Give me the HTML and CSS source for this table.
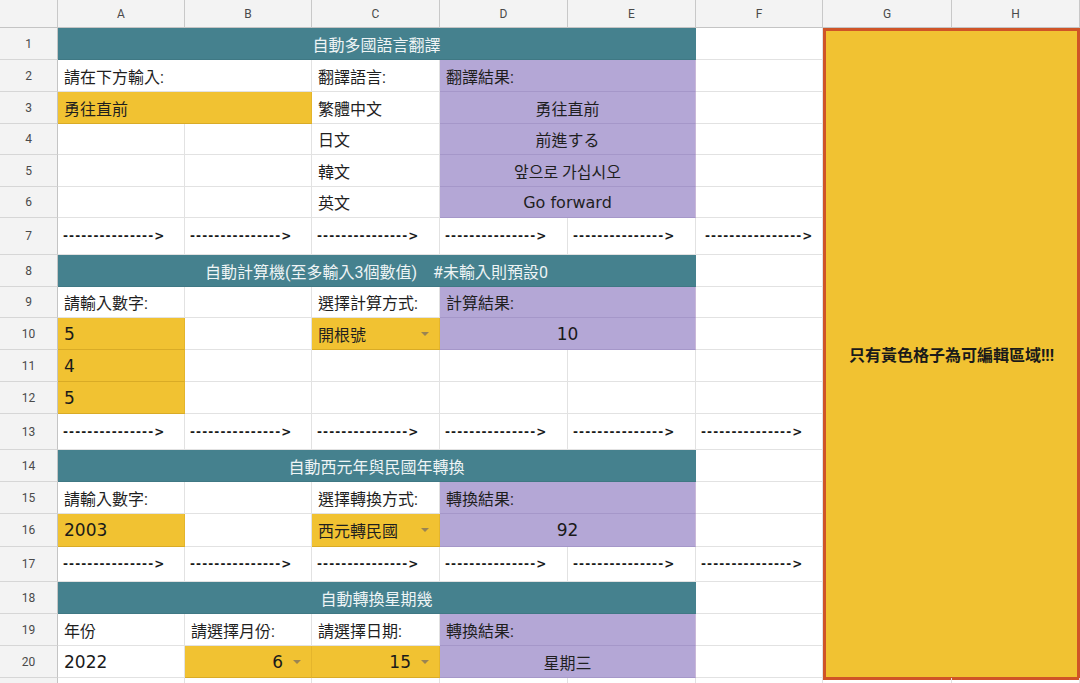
FILE: index.html
```html
<!DOCTYPE html>
<html lang="zh-Hant">
<head>
<meta charset="utf-8">
<title>自動多國語言翻譯</title>
<link rel="stylesheet" href="styles.css">
</head>
<body>
<div class="sheet">
  <div class="h corner"></div>
  <div class="h">A</div><div class="h">B</div><div class="h">C</div><div class="h">D</div><div class="h">E</div><div class="h">F</div><div class="h">G</div><div class="h">H</div>

  <div class="note">只有黃色格子為可編輯區域!!!</div>

  <!-- 1 -->
  <div class="rn">1</div>
  <div class="c teal s5">自動多國語言翻譯</div>
  <div class="c"></div>
  <!-- 2 -->
  <div class="rn">2</div>
  <div class="c s2">請在下方輸入:</div>
  <div class="c">翻譯語言:</div>
  <div class="c purple s2">翻譯結果:</div>
  <div class="c"></div>
  <!-- 3 -->
  <div class="rn">3</div>
  <div class="c yellow s2">勇往直前</div>
  <div class="c">繁體中文</div>
  <div class="c purple s2 center">勇往直前</div>
  <div class="c"></div>
  <!-- 4 -->
  <div class="rn">4</div>
  <div class="c"></div><div class="c"></div>
  <div class="c">日文</div>
  <div class="c purple s2 center">前進する</div>
  <div class="c"></div>
  <!-- 5 -->
  <div class="rn">5</div>
  <div class="c"></div><div class="c"></div>
  <div class="c">韓文</div>
  <div class="c purple s2 center">앞으로 가십시오</div>
  <div class="c"></div>
  <!-- 6 -->
  <div class="rn">6</div>
  <div class="c"></div><div class="c"></div>
  <div class="c">英文</div>
  <div class="c purple s2 center latin">Go forward</div>
  <div class="c"></div>
  <!-- 7 -->
  <div class="rn">7</div>
  <div class="c arrow">---------------&gt;</div>
  <div class="c arrow">---------------&gt;</div>
  <div class="c arrow">---------------&gt;</div>
  <div class="c arrow">---------------&gt;</div>
  <div class="c arrow">---------------&gt;</div>
  <div class="c arrow far">----------------&gt;</div>
  <!-- 8 -->
  <div class="rn">8</div>
  <div class="c teal s5">自動計算機(至多輸入3個數值)&nbsp;&nbsp;&nbsp;&nbsp;#未輸入則預設0</div>
  <div class="c"></div>
  <!-- 9 -->
  <div class="rn">9</div>
  <div class="c">請輸入數字:</div>
  <div class="c"></div>
  <div class="c">選擇計算方式:</div>
  <div class="c purple s2">計算結果:</div>
  <div class="c"></div>
  <!-- 10 -->
  <div class="rn">10</div>
  <div class="c yellow num">5</div>
  <div class="c"></div>
  <div class="c yellow dd"><span>開根號</span><span class="tri"></span></div>
  <div class="c purple s2 center num">10</div>
  <div class="c"></div>
  <!-- 11 -->
  <div class="rn">11</div>
  <div class="c yellow num">4</div>
  <div class="c"></div><div class="c"></div><div class="c"></div><div class="c"></div><div class="c"></div>
  <!-- 12 -->
  <div class="rn">12</div>
  <div class="c yellow num">5</div>
  <div class="c"></div><div class="c"></div><div class="c"></div><div class="c"></div><div class="c"></div>
  <!-- 13 -->
  <div class="rn">13</div>
  <div class="c arrow">---------------&gt;</div>
  <div class="c arrow">---------------&gt;</div>
  <div class="c arrow">---------------&gt;</div>
  <div class="c arrow">---------------&gt;</div>
  <div class="c arrow">---------------&gt;</div>
  <div class="c arrow">---------------&gt;</div>
  <!-- 14 -->
  <div class="rn">14</div>
  <div class="c teal s5">自動西元年與民國年轉換</div>
  <div class="c"></div>
  <!-- 15 -->
  <div class="rn">15</div>
  <div class="c">請輸入數字:</div>
  <div class="c"></div>
  <div class="c">選擇轉換方式:</div>
  <div class="c purple s2">轉換結果:</div>
  <div class="c"></div>
  <!-- 16 -->
  <div class="rn">16</div>
  <div class="c yellow num">2003</div>
  <div class="c"></div>
  <div class="c yellow dd"><span>西元轉民國</span><span class="tri"></span></div>
  <div class="c purple s2 center num">92</div>
  <div class="c"></div>
  <!-- 17 -->
  <div class="rn">17</div>
  <div class="c arrow">---------------&gt;</div>
  <div class="c arrow">---------------&gt;</div>
  <div class="c arrow">---------------&gt;</div>
  <div class="c arrow">---------------&gt;</div>
  <div class="c arrow">---------------&gt;</div>
  <div class="c arrow">---------------&gt;</div>
  <!-- 18 -->
  <div class="rn">18</div>
  <div class="c teal s5">自動轉換星期幾</div>
  <div class="c"></div>
  <!-- 19 -->
  <div class="rn">19</div>
  <div class="c">年份</div>
  <div class="c">請選擇月份:</div>
  <div class="c">請選擇日期:</div>
  <div class="c purple s2">轉換結果:</div>
  <div class="c"></div>
  <!-- 20 -->
  <div class="rn">20</div>
  <div class="c num">2022</div>
  <div class="c yellow dd right"><span class="num">6</span><span class="tri"></span></div>
  <div class="c yellow dd right"><span class="num">15</span><span class="tri"></span></div>
  <div class="c purple s2 center">星期三</div>
  <div class="c"></div>
  <!-- 21 (partially visible) -->
  <div class="rn"></div>
  <div class="c"></div><div class="c"></div><div class="c"></div><div class="c"></div><div class="c"></div><div class="c"></div><div class="c"></div><div class="c"></div>
</div>
</body>
</html>
```

FILE: styles.css
```css
html, body {
  margin: 0;
  padding: 0;
  background: #ffffff;
  overflow: hidden;
}

body {
  font-family: "Roboto", "Noto Sans CJK TC", sans-serif;
  color: #202124;
}

.sheet {
  display: grid;
  grid-template-columns: 58px 127px 127px 128px 128px 128px 127px 129px 128px;
  grid-template-rows: 28px 32px 32px 32px 31px 32px 31px 37px 32px 31px 32px 32px 32px 36px 32px 32px 33px 35px 32px 32px 32px 30px;
  width: 1080px;
}

.h {
  background: #f3f3f3;
  border-right: 1px solid #c8c8c8;
  border-bottom: 1px solid #c4c4c4;
  box-sizing: border-box;
  display: flex;
  align-items: center;
  justify-content: center;
  font-size: 12px;
  color: #4a4a4a;
}

.rn {
  background: #f3f3f3;
  border-right: 1px solid #c4c4c4;
  border-bottom: 1px solid #d6d6d6;
  box-sizing: border-box;
  display: flex;
  align-items: center;
  justify-content: center;
  font-size: 12px;
  color: #4a4a4a;
}

.c {
  border-right: 1px solid #e2e2e2;
  border-bottom: 1px solid #e2e2e2;
  box-sizing: border-box;
  display: flex;
  align-items: center;
  padding: 0 6px;
  font-size: 16px;
  white-space: nowrap;
  overflow: hidden;
  color: #1f1f1f;
}

.s2 { grid-column: span 2; }
.s5 { grid-column: span 5; }

.center { justify-content: center; }

.teal {
  background: #45818e;
  color: #eef4f5;
  justify-content: center;
  border-color: #45818e;
  border-bottom-color: #3f7884;
}

.purple {
  background: #b4a7d6;
  border-right-color: #c9b8d8;
  border-bottom-color: #a597c9;
}

.yellow {
  background: #f1c232;
  border-right-color: #e4b52c;
  border-bottom-color: #d9ab26;
}

.num {
  font-family: "DejaVu Sans", sans-serif;
  font-size: 17px;
  color: #1a1a1a;
}

.latin {
  font-family: "DejaVu Sans", sans-serif;
  font-size: 16px;
}

.arrow {
  font-family: "DejaVu Sans", sans-serif;
  font-weight: bold;
  font-size: 12px;
  letter-spacing: 1.1px;
  color: #1a1a1a;
  padding-left: 5px;
}

.arrow.far { padding-left: 9px; }

.dd {
  justify-content: space-between;
  padding-right: 10px;
}

.dd.right {
  justify-content: flex-end;
  gap: 10px;
}

.tri {
  width: 0;
  height: 0;
  border-left: 4px solid transparent;
  border-right: 4px solid transparent;
  border-top: 4px solid #9a8452;
}

.note {
  grid-column: 8 / span 2;
  grid-row: 2 / span 20;
  background: #f1c232;
  border: 3px solid #cf5427;
  box-sizing: border-box;
  display: flex;
  align-items: center;
  justify-content: center;
  font-weight: bold;
  font-size: 16px;
  color: #1a1a1a;
  margin-bottom: -2px;
}
```
